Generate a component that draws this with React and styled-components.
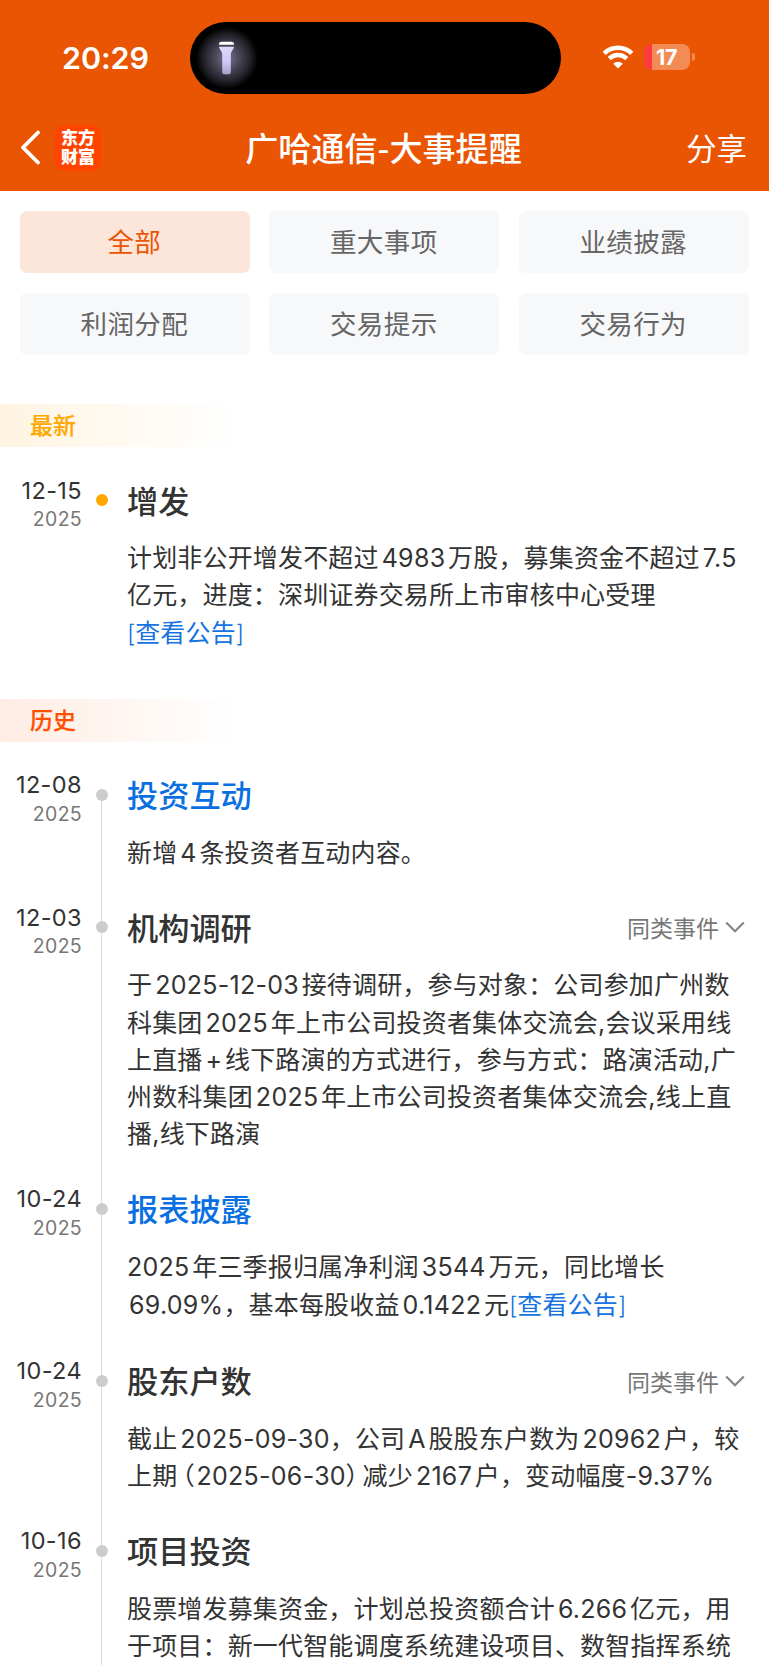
import React from "react";
import styled, { createGlobalStyle } from "styled-components";

const GlobalStyle = createGlobalStyle`
  * { box-sizing: border-box; }
  html, body { margin: 0; padding: 0; background: #fff; }
  body {
    height: 1665px;
    overflow: hidden;
    font-family: "Noto Sans CJK SC", "Noto Sans", sans-serif;
    color: #333;
    text-autospace: no-autospace;
  }
`;

const Screen = styled.div`
  width: 769px;
  height: 1665px;
  overflow: hidden;
  background: #fff;
`;

const Header = styled.header`
  height: 191px;
  background: #ea5504;
  color: #fff;
`;

const StatusBar = styled.div`
  height: 116px;
  padding: 0 74px 0 62px;
  display: grid;
  grid-template-columns: 128px 371px 1fr;
  align-items: center;
`;

const Clock = styled.div`
  margin-top: -1px;
  font: 600 30.5px/36px Inter, sans-serif;
  letter-spacing: -0.1px;
`;

const Island = styled.div`
  height: 72px;
  border-radius: 36px;
  display: flex;
  align-items: center;
  background: radial-gradient(circle at 37px 36px, #77738f 0, #4b485a 12px, #24232b 23px, #000 31px);
`;

const Torch = styled.svg`
  width: 17px;
  height: 34px;
  margin-left: 28px;
`;

const StatusIcons = styled.div`
  display: flex;
  align-items: center;
  padding-left: 41px;
  margin-top: -2px;
`;

const WifiIcon = styled.svg`
  width: 32px;
  height: 24px;
`;

const Battery = styled.div`
  width: 46px;
  height: 26px;
  margin-left: 10px;
  padding-right: 1px;
  border-radius: 8px;
  display: flex;
  align-items: center;
  justify-content: center;
  background: linear-gradient(to right, #ff3b40 8.5px, #f28b54 8.5px);
  font: 700 21.5px/26px Inter, sans-serif;
  letter-spacing: -0.3px;
`;

const BatteryNub = styled.div`
  width: 3px;
  height: 8px;
  margin-left: 2px;
  border-radius: 0 4px 4px 0;
  background: #f28b54;
`;

const NavBar = styled.nav`
  height: 64px;
  padding: 0 22px 0 20px;
  display: grid;
  grid-template-columns: 160px 1fr 160px;
  align-items: center;
`;

const NavLeft = styled.div`
  display: flex;
  align-items: center;
  gap: 15px;
  margin-top: -1px;
`;

const BackIcon = styled.svg`
  width: 20px;
  height: 35px;
`;

const Logo = styled.div`
  width: 46px;
  height: 46px;
  border-radius: 9px;
  display: flex;
  flex-direction: column;
  align-items: center;
  justify-content: center;
  background: #ff4300;
`;

const LogoRow = styled.span`
  font: 900 17px/19px "Liberation Sans", "Noto Sans CJK SC", sans-serif;
`;

const PageTitle = styled.h1`
  margin: -3px 0 0;
  font-size: 33.1px;
  line-height: 44px;
  font-weight: 500;
  text-align: center;
  white-space: nowrap;
`;

const Share = styled.div`
  margin-top: -3px;
  font-size: 30.4px;
  line-height: 40px;
  text-align: right;
`;

const Filters = styled.div`
  padding: 20px 20.5px 0 20px;
  display: grid;
  grid-template-columns: repeat(3, 229.6px);
  grid-auto-rows: 62px;
  justify-content: space-between;
  row-gap: 20px;
`;

const Filter = styled.button`
  border: 0;
  padding: 0 1px 2px 0;
  border-radius: 7px;
  font: 400 26.5px/40px "Noto Sans CJK SC", sans-serif;
  letter-spacing: 0.4px;
  color: ${(p) => (p.$active ? "#ea5504" : "#666")};
  background: ${(p) => (p.$active ? "#fce6da" : "#f7f8fa")};
`;

const SectionLabel = styled.h2`
  width: 236px;
  height: 43px;
  margin: ${(p) => p.$top}px 0 33px;
  padding-left: 30px;
  font-size: 23px;
  line-height: 41px;
  font-weight: 500;
  color: ${(p) => p.$color};
  -webkit-text-stroke: 0.2px ${(p) => p.$color};
  background: linear-gradient(to right, ${(p) => p.$tint}, #fff);
`;

const Event = styled.article`
  display: grid;
  grid-template-columns: 82px 39px 1fr;
  padding-right: 20px;
`;

const DateColumn = styled.div`
  text-align: right;
  font-family: Inter, sans-serif;
`;

const Day = styled.div`
  margin-top: -3.5px;
  font-size: 23.5px;
  line-height: 28px;
  letter-spacing: 0.4px;
`;

const Year = styled.div`
  margin-top: 2.5px;
  font-size: 19.5px;
  line-height: 24px;
  letter-spacing: 0.3px;
  color: #777;
`;

const Rail = styled.div`
  display: flex;
  flex-direction: column;
  align-items: center;
`;

const RailLine = styled.div`
  width: 1px;
  background: ${(p) => (p.$visible ? "#d9d9d9" : "transparent")};
  height: ${(p) => (p.$lead ? "14px" : "auto")};
  flex: ${(p) => (p.$lead ? "none" : "1")};
`;

const Dot = styled.div`
  width: 12px;
  height: 12px;
  border-radius: 50%;
  background: ${(p) => p.$color};
`;

const Content = styled.div`
  padding: 0 0 ${(p) => p.$bottom}px 6px;
`;

const EventHead = styled.div`
  height: 40px;
  margin-bottom: 18px;
  display: flex;
  align-items: center;
  justify-content: space-between;
`;

const EventTitle = styled.h3`
  margin: -1px 0 0;
  font-size: 31.2px;
  line-height: 40px;
  font-weight: 500;
  color: ${(p) => (p.$link ? "#0a6fe0" : "#333")};
`;

const Similar = styled.div`
  display: flex;
  align-items: center;
  gap: 6px;
  padding-right: 4px;
  font-size: 23px;
  line-height: 32px;
  color: #777;
`;

const ChevronIcon = styled.svg`
  width: 20px;
  height: 12px;
`;

const Line = styled.div`
  height: ${(p) => (p.$tall ? 39.4 : 37.2)}px;
  line-height: ${(p) => (p.$tall ? 39.4 : 37.2)}px;
  padding-left: ${(p) => p.$indent || 0}px;
  font-size: 25px;
  letter-spacing: 0.17px;
  white-space: nowrap;
`;

const Latin = styled.span`
  font-family: Inter, sans-serif;
  font-size: 25px;
  letter-spacing: 0.27px;
  margin-left: ${(p) => (p.$before ? 3 : 0)}px;
  margin-right: ${(p) => (p.$after ? 2.7 : 0)}px;
`;

const Bracket = styled.span`
  font-family: Inter, sans-serif;
  font-size: 24px;
  font-weight: 300;
  letter-spacing: -0.2px;
`;

const Paren = styled.span`
  font-feature-settings: "halt";
  margin: ${(p) => (p.$open ? "0 1.5px 0 5px" : "0 4.5px 0 -0.5px")};
`;

const Link = styled.a`
  color: #1673e0;
`;

const isHan = (ch) => !!ch && /[\u4e00-\u9fff]/.test(ch);

function renderRuns(text) {
  const parts = text.split(/([0-9A-Za-z.%\-]+|[+,[\]]|[（）])/).filter(Boolean);
  return parts.map((part, i) => {
    if (/^[（）]$/.test(part)) {
      return <Paren key={i} $open={part === "（"}>{part}</Paren>;
    }
    if (/^[[\]]$/.test(part)) {
      return <Bracket key={i}>{part}</Bracket>;
    }
    if (/^[0-9A-Za-z.%\-+,]+$/.test(part)) {
      const prev = parts[i - 1];
      const next = parts[i + 1];
      return (
        <Latin
          key={i}
          $before={/^[0-9A-Za-z+]/.test(part) && isHan(prev && prev.slice(-1))}
          $after={/[0-9A-Za-z+]$/.test(part) && isHan(next && next[0])}
        >
          {part}
        </Latin>
      );
    }
    return part;
  });
}

const filters = ["全部", "重大事项", "业绩披露", "利润分配", "交易提示", "交易行为"];

const latest = [
  {
    day: "12-15",
    title: "增发",
    lines: [
      { text: "计划非公开增发不超过4983万股，募集资金不超过7.5" },
      { text: "亿元，进度：深圳证券交易所上市审核中心受理" },
      { link: "[查看公告]", tall: true },
    ],
  },
];

const history = [
  { day: "12-08", title: "投资互动", isLink: true, lines: [{ text: "新增4条投资者互动内容。" }] },
  {
    day: "12-03",
    title: "机构调研",
    similar: true,
    lines: [
      { text: "于2025-12-03接待调研，参与对象：公司参加广州数" },
      { text: "科集团2025年上市公司投资者集体交流会,会议采用线" },
      { text: "上直播+线下路演的方式进行，参与方式：路演活动,广" },
      { text: "州数科集团2025年上市公司投资者集体交流会,线上直" },
      { text: "播,线下路演" },
    ],
  },
  {
    day: "10-24",
    title: "报表披露",
    isLink: true,
    lines: [
      { text: "2025年三季报归属净利润3544万元，同比增长" },
      { text: "69.09%，基本每股收益0.1422元", link: "[查看公告]", tall: true, indent: 2 },
    ],
  },
  {
    day: "10-24",
    title: "股东户数",
    similar: true,
    lines: [
      { text: "截止2025-09-30，公司A股股东户数为20962户，较" },
      { text: "上期（2025-06-30）减少2167户，变动幅度-9.37%" },
    ],
  },
  {
    day: "10-16",
    title: "项目投资",
    lines: [
      { text: "股票增发募集资金，计划总投资额合计6.266亿元，用" },
      { text: "于项目：新一代智能调度系统建设项目、数智指挥系统" },
    ],
  },
];

function EventRow({ event, color, before, after, bottom }) {
  return (
    <Event>
      <DateColumn>
        <Day>{event.day}</Day>
        <Year>2025</Year>
      </DateColumn>
      <Rail>
        <RailLine $lead $visible={before} />
        <Dot $color={color} />
        <RailLine $visible={after} />
      </Rail>
      <Content $bottom={bottom}>
        <EventHead>
          <EventTitle $link={event.isLink}>{event.title}</EventTitle>
          {event.similar && (
            <Similar>
              同类事件
              <ChevronIcon viewBox="0 0 20 12" fill="none" stroke="#858585" strokeWidth="2.2">
                <path d="M1.2 1.5 10 10.2 18.8 1.5" />
              </ChevronIcon>
            </Similar>
          )}
        </EventHead>
        {event.lines.map((line, i) => (
          <Line key={i} $tall={line.tall} $indent={line.indent}>
            {line.text && renderRuns(line.text)}
            {line.link && <Link>{renderRuns(line.link)}</Link>}
          </Line>
        ))}
      </Content>
    </Event>
  );
}

export default function App() {
  return (
    <Screen>
      <GlobalStyle />
      <Header>
        <StatusBar>
          <Clock>20:29</Clock>
          <Island>
            <Torch viewBox="0 0 17 34">
              <defs>
                <linearGradient id="torch" x1="0" y1="0" x2="0" y2="1">
                  <stop offset="0" stopColor="#dcd8fb" />
                  <stop offset="0.55" stopColor="#cdc9f4" />
                  <stop offset="1" stopColor="#a5a1c4" />
                </linearGradient>
              </defs>
              <path d="M1 3.8V3Q1 .8 3.4 .8H13.6Q16 .8 16 3V3.8Z" fill="#fff" />
              <path d="M1 5.7H16C15.7 8.5 12.8 10.3 12.8 13.5V31Q12.8 33.3 10.8 33.3H6.2Q4.2 33.3 4.2 31V13.5C4.2 10.3 1.3 8.5 1 5.7Z" fill="url(#torch)" />
            </Torch>
          </Island>
          <StatusIcons>
            <WifiIcon viewBox="0 0 32 24" fill="none" stroke="#fff" strokeWidth="4.5">
              <path d="M2.2 8.4A19.6 19.6 0 0 1 29.8 8.4" />
              <path d="M7.3 13.7A12.3 12.3 0 0 1 24.7 13.7" />
              <path d="M16 23.5 11.2 18.7A6.8 6.8 0 0 1 20.8 18.7Z" fill="#fff" stroke="none" />
            </WifiIcon>
            <Battery>17</Battery>
            <BatteryNub />
          </StatusIcons>
        </StatusBar>
        <NavBar>
          <NavLeft>
            <BackIcon
              viewBox="0 0 20 35"
              fill="none"
              stroke="#fff"
              strokeWidth="3.8"
              strokeLinecap="round"
              strokeLinejoin="round"
            >
              <path d="M18 2.5 3 17.5 18 32.5" />
            </BackIcon>
            <Logo>
              <LogoRow>东方</LogoRow>
              <LogoRow>财富</LogoRow>
            </Logo>
          </NavLeft>
          <PageTitle>广哈通信-大事提醒</PageTitle>
          <Share>分享</Share>
        </NavBar>
      </Header>
      <Filters>
        {filters.map((name, i) => (
          <Filter key={name} $active={i === 0}>
            {name}
          </Filter>
        ))}
      </Filters>
      <SectionLabel $top={49} $color="#ffa800" $tint="#fff4e2">
        最新
      </SectionLabel>
      {latest.map((event) => (
        <EventRow key={event.title} event={event} color="#ffa800" bottom={1} />
      ))}
      <SectionLabel $top={46} $color="#ff4f00" $tint="#ffece4">
        历史
      </SectionLabel>
      {history.map((event, i) => (
        <EventRow key={event.title} event={event} color="#ccc" before={i > 0} after bottom={37.5} />
      ))}
    </Screen>
  );
}
